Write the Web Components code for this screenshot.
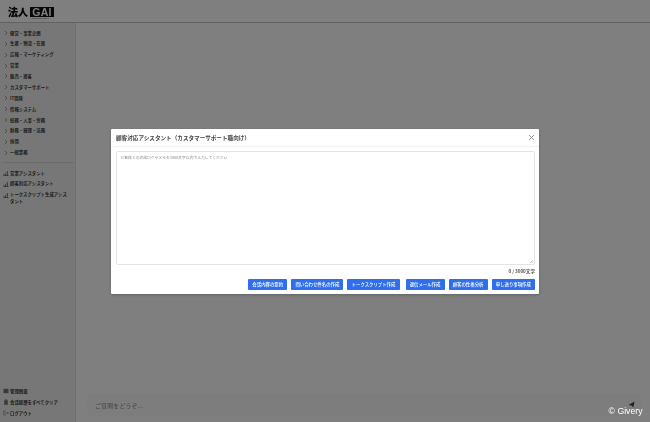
<!DOCTYPE html>
<html lang="ja">
<head>
<meta charset="utf-8">
<title>法人GAI</title>
<style>
  html, body { margin: 0; height: 100%; }
  body { font-family: "Noto Sans CJK JP", "Noto Sans", sans-serif; overflow: hidden; }
</style>
</head>
<body>
<gai-app>
  <gai-sidebar>
    <nav-item kind="chevron">経営・事業企画</nav-item>
    <nav-item kind="chevron">生産・物流・在庫</nav-item>
    <nav-item kind="chevron">広報・マーケティング</nav-item>
    <nav-item kind="chevron">営業</nav-item>
    <nav-item kind="chevron">販売・接客</nav-item>
    <nav-item kind="chevron">カスタマーサポート</nav-item>
    <nav-item kind="chevron">IT開発</nav-item>
    <nav-item kind="chevron">情報システム</nav-item>
    <nav-item kind="chevron">総務・人事・労務</nav-item>
    <nav-item kind="chevron">財務・経理・法務</nav-item>
    <nav-item kind="chevron">採用</nav-item>
    <nav-item kind="chevron">一般業務</nav-item>
    <nav-item slot="assistants" kind="chart">営業アシスタント</nav-item>
    <nav-item slot="assistants" kind="chart">顧客対応アシスタント</nav-item>
    <nav-item slot="assistants" kind="chart">トークスクリプト生成アシスタント</nav-item>
    <nav-item slot="footer" kind="admin">管理画面</nav-item>
    <nav-item slot="footer" kind="trash">会話履歴をすべてクリア</nav-item>
    <nav-item slot="footer" kind="logout">ログアウト</nav-item>
  </gai-sidebar>
  <chat-input slot="main"></chat-input>
  <gai-modal slot="overlay" heading="顧客対応アシスタント（カスタマーサポート職向け）">
    <action-button>会話内容の要約</action-button>
    <action-button>問い合わせ件名の作成</action-button>
    <action-button>トークスクリプト作成</action-button>
    <action-button style="margin-left:2px">返信メール作成</action-button>
    <action-button>顧客の性格分析</action-button>
    <action-button>申し送り事項作成</action-button>
  </gai-modal>
</gai-app>

<script>
(function () {
  const jp = '"Noto Sans CJK JP", "Noto Sans", sans-serif';

  class GaiApp extends HTMLElement {
    constructor() {
      super();
      const shadow = this.attachShadow({ mode: "open" });
      shadow.innerHTML = `
        <style>
          :host { display: block; position: relative; width: 650px; height: 422px; overflow: hidden; background: #fff; color: #222; font-family: ${jp}; }
          header { box-sizing: border-box; height: 23px; display: flex; align-items: flex-start; gap: 2px; padding: 6.5px 0 0 8px; border-bottom: 1px solid #c4c4c4; filter: blur(.2px); }
          .hojin { font-size: 10px; font-weight: 900; color: #000; line-height: 10.5px; -webkit-text-stroke: .15px #000; }
          .mark { display: flex; flex-direction: column; align-items: flex-end; width: 24px; }
          .gai { background: #111; color: #fff; font: 700 10.5px/10.5px "Liberation Sans", sans-serif; width: 24px; text-align: center; letter-spacing: .3px; }
          .by { font: 2.1px/3.5px "Liberation Sans", sans-serif; color: #222; margin-right: 5px; white-space: nowrap; }
          .body { display: flex; height: 399px; filter: blur(.3px); }
          main { flex: 1; display: flex; flex-direction: column; justify-content: flex-end; min-width: 0; }
          .overlay { position: absolute; inset: 0; background: rgba(0, 0, 0, .5); }
          .credit { position: absolute; right: 7.5px; bottom: 5px; color: #fff; font: 8.7px/12px "Liberation Sans", sans-serif; }
        </style>
        <header>
          <span class="hojin">法人</span>
          <span class="mark"><span class="gai">GAI</span><span class="by">Powered by GPT-4</span></span>
        </header>
        <div class="body">
          <slot></slot>
          <main><slot name="main"></slot></main>
        </div>
        <div class="overlay"><slot name="overlay"></slot></div>
        <span class="credit">© Givery</span>
      `;
    }
  }

  class GaiSidebar extends HTMLElement {
    constructor() {
      super();
      const shadow = this.attachShadow({ mode: "open" });
      shadow.innerHTML = `
        <style>
          :host { display: flex; flex-direction: column; box-sizing: border-box; width: 76px; height: 100%; flex: none; background: #efefef; border-right: 1px solid #e2e2e2; padding: 4.5px 2px 3.5px 3px; }
          .group { display: flex; flex-direction: column; }
          hr { border: 0; border-top: 1px solid #d8d8d8; margin: 4px 0 4.5px; width: 71px; }
          .grow { flex: 1; }
        </style>
        <div class="group"><slot></slot></div>
        <hr>
        <div class="group"><slot name="assistants"></slot></div>
        <div class="grow"></div>
        <div class="group"><slot name="footer"></slot></div>
      `;
    }
  }

  const ICONS = {
    chevron: '<path d="M2 1l2 2-2 2" fill="none" stroke="#666" stroke-width=".6"/>',
    chart: '<path d="M.5 5.5h5M1 5V4M2.7 5V2.8M4.4 5V1" fill="none" stroke="#555" stroke-width=".8"/>',
    admin: '<rect x=".5" y=".8" width="5" height="4.4" fill="#777"/>',
    trash: '<path d="M1 1.6h4M1.5 2v3.6h3V2M2.3 1.5V.8h1.4v.7" fill="#777" stroke="#666" stroke-width=".5"/>',
    logout: '<path d="M3 1H.8v4H3M2 3h3.4M4.4 2l1 1-1 1" fill="none" stroke="#777" stroke-width=".6"/>'
  };

  class NavItem extends HTMLElement {
    constructor() {
      super();
      const shadow = this.attachShadow({ mode: "open" });
      const kind = this.getAttribute("kind") || "chevron";
      shadow.innerHTML = `
        <style>
          :host { display: flex; align-items: flex-start; gap: 1px; min-height: 10.88px; font-size: 4.4px; font-weight: 700; color: #3a3a3a; }
          svg { width: 6px; height: 6px; flex: none; margin-top: 2.4px; }
          .t { line-height: 6.7px; padding: 2.09px 0; max-width: 60px; overflow-wrap: anywhere; }
        </style>
        <svg viewBox="0 0 6 6">${ICONS[kind]}</svg>
        <span class="t"><slot></slot></span>
      `;
    }
  }

  class ChatInput extends HTMLElement {
    constructor() {
      super();
      const shadow = this.attachShadow({ mode: "open" });
      shadow.innerHTML = `
        <style>
          :host { display: flex; align-items: center; justify-content: space-between; box-sizing: border-box; height: 20px; margin: 0 10px 7px 12px; padding: 0 5px 0 7px; background: #fbfbfb; border-radius: 2px; box-shadow: 0 0 2px rgba(0,0,0,.08); }
          span { font-size: 6px; color: #8a8a8a; letter-spacing: .1px; }
          svg { width: 7px; height: 7px; margin-top: -1px; }
        </style>
        <span>ご質問をどうぞ...</span>
        <svg viewBox="0 0 8 8"><path d="M.5 4.5L7.5.5 6 7.5 4 5.2z" fill="#444"/></svg>
      `;
    }
  }

  class GaiModal extends HTMLElement {
    constructor() {
      super();
      const shadow = this.attachShadow({ mode: "open" });
      shadow.innerHTML = `
        <style>
          :host { display: flex; flex-direction: column; box-sizing: border-box; width: 428px; height: 165px; margin: 129px 0 0 111px; background: #fff; border-radius: 1px; box-shadow: 0 1px 3px rgba(0,0,0,.25); color: #333; filter: blur(.25px); }
          .head { display: flex; align-items: center; justify-content: space-between; box-sizing: border-box; height: 18px; padding: 0 4px 0 5px; border-bottom: 1px solid #f0f0f0; }
          h2 { margin: 0; font-size: 5.6px; line-height: 18px; font-weight: 700; color: #444; }
          svg { width: 7px; height: 7px; }
          .box { box-sizing: border-box; height: 114px; margin: 4px 4px 0 4.5px; padding: 3px 4px; border: 1px solid #e4e4e4; border-radius: 2px; font-size: 3.8px; line-height: 6px; color: #8c8c8c; position: relative; }
          .grip { position: absolute; right: 1px; bottom: 1px; width: 4px; height: 4px; }
          .count { align-self: flex-end; margin: 2.5px 4px 0 0; font-size: 4.6px; line-height: 7px; font-weight: 700; color: #555; }
          .actions { display: flex; justify-content: flex-end; gap: 4px; margin: 4.5px 4px 0 0; }
        </style>
        <div class="head">
          <h2></h2>
          <svg viewBox="0 0 7 7"><path d="M1 1l5 5M6 1L1 6" stroke="#777" stroke-width=".8" fill="none"/></svg>
        </div>
        <div class="box">お客様との会話ログやメモを3000文字以内で入力してください
          <svg class="grip" viewBox="0 0 4 4"><path d="M4 1L1 4M4 2.6L2.6 4" stroke="#999" stroke-width=".5"/></svg>
        </div>
        <div class="count">0 / 3000文字</div>
        <div class="actions"><slot></slot></div>
      `;
      shadow.querySelector("h2").textContent = this.getAttribute("heading") || "";
    }
  }

  class ActionButton extends HTMLElement {
    constructor() {
      super();
      const shadow = this.attachShadow({ mode: "open" });
      shadow.innerHTML = `
        <style>
          :host { display: block; box-sizing: border-box; height: 10.5px; padding: 0 4.15px; background: #2f6fed; border-radius: 1px; color: #fff; font-size: 4.4px; line-height: 10.5px; font-weight: 500; white-space: nowrap; }
        </style>
        <slot></slot>
      `;
    }
  }

  customElements.define("gai-app", GaiApp);
  customElements.define("gai-sidebar", GaiSidebar);
  customElements.define("nav-item", NavItem);
  customElements.define("chat-input", ChatInput);
  customElements.define("gai-modal", GaiModal);
  customElements.define("action-button", ActionButton);
})();
</script>
</body>
</html>
